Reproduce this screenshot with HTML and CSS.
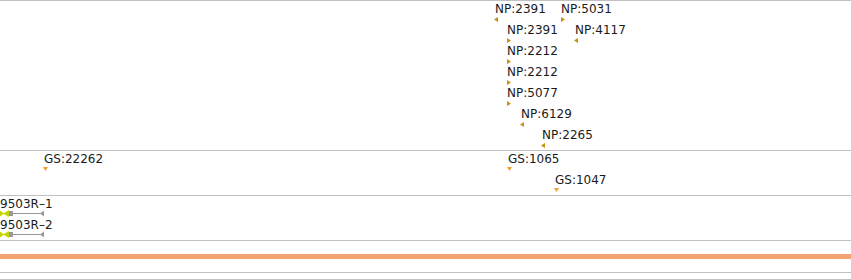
FILE: index.html
```html
<!DOCTYPE html>
<html lang="en">
<head>
    <meta charset="UTF-8">
    <title>Tracks</title>
    <link rel="stylesheet" href="styles.css">
</head>
<body>
    <div class="tracks">
        <div class="track track-np">
            <div class="feat" style="left:495px; top:1px"><span class="label">NP:2391</span><svg class="mk" width="6" height="6"><polygon class="np" points="0,2.5 4,0 4,5"/></svg></div>
            <div class="feat" style="left:561px; top:1px"><span class="label">NP:5031</span><svg class="mk mk-r" width="6" height="6"><polygon class="np" points="0,0 4,2.5 0,5"/></svg></div>
            <div class="feat" style="left:507px; top:22px"><span class="label">NP:2391</span><svg class="mk mk-r" width="6" height="6"><polygon class="np" points="0,0 4,2.5 0,5"/></svg></div>
            <div class="feat" style="left:575px; top:22px"><span class="label">NP:4117</span><svg class="mk" width="6" height="6"><polygon class="np" points="0,2.5 4,0 4,5"/></svg></div>
            <div class="feat" style="left:507px; top:43px"><span class="label">NP:2212</span><svg class="mk mk-r" width="6" height="6"><polygon class="np" points="0,0 4,2.5 0,5"/></svg></div>
            <div class="feat" style="left:507px; top:64px"><span class="label">NP:2212</span><svg class="mk mk-r" width="6" height="6"><polygon class="np" points="0,0 4,2.5 0,5"/></svg></div>
            <div class="feat" style="left:507px; top:85px"><span class="label">NP:5077</span><svg class="mk mk-r" width="6" height="6"><polygon class="np" points="0,0 4,2.5 0,5"/></svg></div>
            <div class="feat" style="left:521px; top:106px"><span class="label">NP:6129</span><svg class="mk" width="6" height="6"><polygon class="np" points="0,2.5 4,0 4,5"/></svg></div>
            <div class="feat" style="left:542px; top:127px"><span class="label">NP:2265</span><svg class="mk" width="6" height="6"><polygon class="np" points="0,2.5 4,0 4,5"/></svg></div>
        </div>
        <div class="track track-gs">
            <div class="feat" style="left:44px; top:1px"><span class="label">GS:22262</span><svg class="mk" width="6" height="6"><polygon class="gs" points="0,0 5,0 2.5,4"/></svg></div>
            <div class="feat" style="left:508px; top:1px"><span class="label">GS:1065</span><svg class="mk" width="6" height="6"><polygon class="gs" points="0,0 5,0 2.5,4"/></svg></div>
            <div class="feat" style="left:555px; top:22px"><span class="label">GS:1047</span><svg class="mk" width="6" height="6"><polygon class="gs" points="0,0 5,0 2.5,4"/></svg></div>
        </div>
        <div class="track track-tx">
            <div class="feat" style="left:0; top:1px"><span class="label">9503R–1</span>
                <svg class="gene" width="46" height="7">
                    <polygon class="utr" points="0,0.5 4,3.5 0,6.5"/>
                    <polygon class="utr" points="3,3.5 9,0 9,7"/>
                    <rect class="cds" x="9" y="1" width="4" height="5"/>
                    <rect class="intron" x="13" y="3" width="28" height="1"/>
                    <polygon class="cds" points="40,3.5 44,0.5 44,6.5"/>
                </svg>
            </div>
            <div class="feat" style="left:0; top:22px"><span class="label">9503R–2</span>
                <svg class="gene" width="46" height="7">
                    <polygon class="utr" points="0,0.5 4,3.5 0,6.5"/>
                    <polygon class="utr" points="3,3.5 9,0 9,7"/>
                    <rect class="cds" x="9" y="1" width="4" height="5"/>
                    <rect class="intron" x="13" y="3" width="28" height="1"/>
                    <polygon class="cds" points="40,3.5 44,0.5 44,6.5"/>
                </svg>
            </div>
        </div>
        <div class="scale">
            <div class="scale-bar"></div>
        </div>
        <div class="footer-rule"></div>
    </div>
</body>
</html>
```

FILE: styles.css
```css
body { margin: 0; background: #fff; font-family: "DejaVu Sans", sans-serif; font-size: 12px; color: #1a1a1a; }
.tracks { width: 851px; }
.track { position: relative; border-top: 1px solid #c0c0c0; }
.track-np { height: 149px; }
.track-gs { height: 44px; }
.track-tx { height: 44px; }
.feat { position: absolute; display: flex; flex-direction: column; align-items: flex-start; white-space: nowrap; }
.label { display: block; height: 15px; line-height: 14px; }
.mk { display: block; margin-left: -1px; }
.mk-r { margin-left: 0; }
.np { fill: #c8900e; }
.gs { fill: #f0a22e; }
.gene { display: block; margin-top: -2px; }
.utr { fill: #c8d400; }
.cds { fill: #999; }
.intron { fill: #999; }
.scale { border-top: 1px solid #c0c0c0; padding: 13px 0; }
.scale-bar { height: 5px; background: #f4a372; }
.footer-rule { border-top: 1px solid #c0c0c0; border-bottom: 1px solid #c0c0c0; height: 6px; }
```
